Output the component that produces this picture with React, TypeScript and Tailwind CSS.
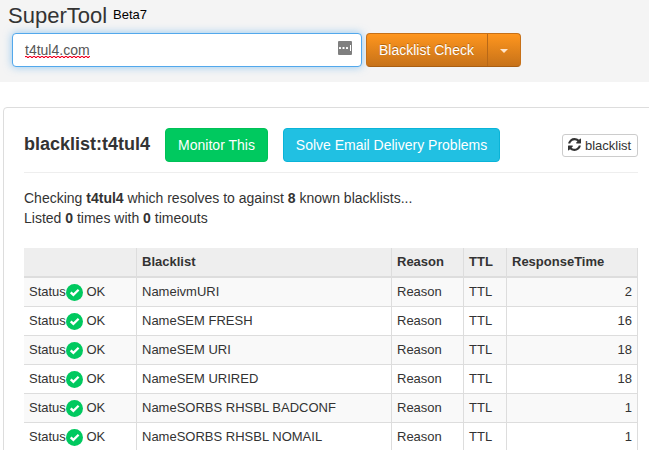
const rows = [
  { name: 'ivmURI', time: 2 },
  { name: 'SEM FRESH', time: 16 },
  { name: 'SEM URI', time: 18 },
  { name: 'SEM URIRED', time: 18 },
  { name: 'SORBS RHSBL BADCONF', time: 1 },
  { name: 'SORBS RHSBL NOMAIL', time: 1 },
];

const cell = 'border-l border-[#ddd] pl-[5px]';

function CheckIcon() {
  return (
    <svg viewBox="0 0 17 17" className="mt-[2px] h-[17px] w-[17px] shrink-0">
      <circle cx="8.5" cy="8.5" r="8.5" fill="#00c95f" />
      <path d="M4.7 8.3 7.4 10.9 12.6 5.8" fill="none" stroke="#fff" strokeWidth="2.3" />
    </svg>
  );
}

function RefreshIcon() {
  return (
    <svg viewBox="0 0 1536 1536" className="h-[13px] w-[13px] shrink-0" fill="#333">
      <path d="M1511 928q0 5-1 7-64 268-268 434.5t-478 166.5q-146 0-282.5-55t-243.5-157l-129 129q-19 19-45 19t-45-19-19-45v-448q0-26 19-45t45-19h448q26 0 45 19t19 45-19 45l-137 137q71 66 161 102t187 36q134 0 250-65t186-179q11-17 53-117 8-23 30-23h192q13 0 22.5 9.5t9.5 22.5zm25-800v448q0 26-19 45t-45 19h-448q-26 0-45-19t-19-45 19-45l138-138q-148-137-349-137-134 0-250 65t-186 179q-11 17-53 117-8 23-30 23h-199q-13 0-22.5-9.5t-9.5-22.5v-7q65-268 270-434.5t480-166.5q146 0 284 55.5t245 156.5l130-129q19-19 45-19t45 19 19 45z" />
    </svg>
  );
}

function SearchBar() {
  return (
    <header className="h-[82px] bg-[#f4f4f4] pl-2">
      <div className="flex h-[33px] items-start">
        <h1 className="w-[105px] text-[22px] leading-[31px] text-[#333]">SuperTool</h1>
        <span className="text-[13px] leading-[29px] text-black">Beta7</span>
      </div>
      <div className="ml-1 flex gap-1">
        <div className="flex h-[34px] w-[350px] items-start justify-between rounded-[4px] border border-[#52a8ec] bg-white pr-[9px] pl-3 shadow-[0_0_8px_rgba(82,168,236,0.6)]">
          <span className="relative mt-[6px] text-[14px] leading-[20px] text-[#555]">
            t4tul4.com
            <svg className="absolute top-[16px] left-0 h-[2px] w-[65px]" viewBox="0 0 65 2" shapeRendering="crispEdges">
              <defs>
                <pattern id="wave" width="4" height="2" patternUnits="userSpaceOnUse">
                  <rect x="0" y="0" width="2" height="1" fill="#f00020" />
                  <rect x="2" y="0" width="2" height="1" fill="#f00020" fillOpacity="0.4" />
                  <rect x="2" y="1" width="2" height="1" fill="#f00020" />
                  <rect x="0" y="1" width="2" height="1" fill="#f00020" fillOpacity="0.15" />
                </pattern>
              </defs>
              <rect width="65" height="2" fill="url(#wave)" />
            </svg>
          </span>
          <svg viewBox="0 0 14 14" className="mt-[7px] h-[14px] w-[14px]">
            <rect width="14" height="14" rx="1" fill="#7f7f7f" />
            <g fill="#fff">
              <rect x="1" y="6" width="2" height="2" rx="0.5" />
              <rect x="4.5" y="6" width="2" height="2" rx="0.5" />
              <rect x="8" y="6" width="2" height="2" rx="0.5" />
              <rect x="12" y="4" width="1" height="6" />
            </g>
          </svg>
        </div>
        <div className="flex h-[34px] w-[155px] rounded-[4px] border border-[#c67018] border-b-[#a95e12] bg-linear-to-b from-[#ff961e] to-[#c77219] text-[14px] text-white">
          <span className="w-[120px] pl-3 leading-[32px] [text-shadow:0_-1px_0_rgba(0,0,0,0.25)]">Blacklist Check</span>
          <span className="flex flex-1 items-center justify-center border-l border-[#b86817] pt-[2px]">
            <i className="h-0 w-0 border-x-4 border-t-4 border-x-transparent border-t-[#ffe5cb]" />
          </span>
        </div>
      </div>
    </header>
  );
}

export default function App() {
  return (
    <div className="h-[450px] w-[649px] overflow-hidden bg-white font-['Liberation_Sans',Arial,sans-serif] text-[#333]">
      <SearchBar />
      <main className="mt-[25px] ml-[3px] h-[400px] w-[660px] rounded-[4px] border border-[#ddd] pl-5">
        <div className="w-[614px]">
          <div className="flex h-[65px] items-start border-b border-[#eee] pt-5">
            <h2 className="w-[141px] text-[18px] leading-[32px] font-bold">blacklist:t4tul4</h2>
            <span className="h-[34px] w-[103px] rounded-[4px] border border-[#00c157] bg-[#00c95f] text-center text-[14px] leading-[32px] text-white">
              Monitor This
            </span>
            <span className="ml-[15px] h-[34px] w-[217px] rounded-[4px] border border-[#0ab4d8] bg-[#21c0e2] text-center text-[14px] leading-[32px] text-white">
              Solve Email Delivery Problems
            </span>
            <span className="mt-[6px] ml-auto flex h-[23px] w-[76px] items-start gap-[4px] rounded-[3px] border border-[#ccc] pt-[3px] pl-[5px] text-[13px] leading-[15px]">
              <RefreshIcon />
              blacklist
            </span>
          </div>
          <p className="mt-[15px] text-[14px] leading-[20px]">
            Checking <b>t4tul4</b> which resolves to against <b>8</b> known blacklists...
            <br />
            Listed <b>0</b> times with <b>0</b> timeouts
          </p>
          <table className="mt-5 w-[614px] table-fixed border-separate border-spacing-0 text-[13px] leading-[20px]">
            <colgroup>
              <col className="w-[112px]" />
              <col className="w-[255px]" />
              <col className="w-[72px]" />
              <col className="w-[43px]" />
              <col className="w-[132px]" />
            </colgroup>
            <thead>
              <tr className="h-[30px] bg-[#eee] text-left [&>th]:border-b-2 [&>th]:border-[#ddd] [&>th]:py-0 [&>th]:pb-px">
                <th />
                <th className={cell}>Blacklist</th>
                <th className={cell}>Reason</th>
                <th className={cell}>TTL</th>
                <th className={`${cell} border-r`}>ResponseTime</th>
              </tr>
            </thead>
            <tbody>
              {rows.map((row) => (
                <tr key={row.name} className="h-[29px] odd:bg-[#f9f9f9] [&>td]:border-b [&>td]:border-[#ddd] [&>td]:py-0">
                  <td className="pl-[5px]">
                    <div className="flex h-5 items-start">
                      <span className="w-[37px]">Status</span>
                      <CheckIcon />
                      <span className="ml-[3.5px]">OK</span>
                    </div>
                  </td>
                  <td className={cell}>Name{row.name}</td>
                  <td className={cell}>Reason</td>
                  <td className={cell}>TTL</td>
                  <td className={`${cell} border-r pr-[5px] text-right`}>{row.time}</td>
                </tr>
              ))}
            </tbody>
          </table>
        </div>
      </main>
    </div>
  );
}
